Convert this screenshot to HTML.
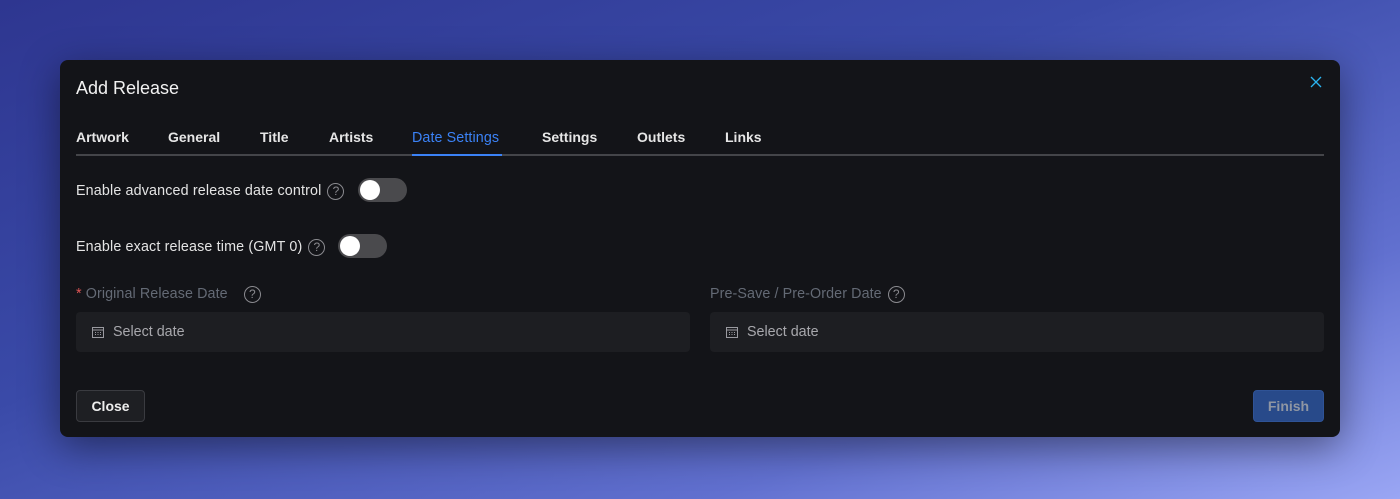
<!DOCTYPE html>
<html><head><style>
*{box-sizing:border-box;margin:0;padding:0}
body{width:1400px;height:499px;overflow:hidden;font-family:"Liberation Sans",sans-serif;background:linear-gradient(160deg,#2e3690 0%,#3a4aa8 40%,#6170cf 75%,#9aa6f4 100%);position:relative}
.m{position:absolute;left:60px;top:60px;width:1280px;height:377px;background:#131418;border-radius:8px;box-shadow:0 10px 40px rgba(0,0,0,.45)}
.t{position:absolute;left:16px;top:18px;font-size:18px;color:#f2f2f2}
.x{position:absolute;left:1249px;top:15px}
.tabs{position:absolute;left:16px;top:69px;width:1248px;height:27px;border-bottom:2px solid #444549}
.tab{position:absolute;top:0;font-size:14px;line-height:16px;font-weight:bold;color:#e6e6e6}
.tab.a{color:#3b82f6;font-weight:normal;font-size:14.3px;letter-spacing:.1px;height:27px;padding-top:1px;border-bottom:2px solid #3b82f6}
.lbl{position:absolute;font-size:14.3px;color:#e4e4e4;display:flex;align-items:center;gap:6px;height:20px;letter-spacing:.15px}
.q{display:inline-block;width:17px;height:17px;border:1.2px solid #8a8a8f;border-radius:50%;font-size:12px;color:#8a8a8f;text-align:center;line-height:15px;letter-spacing:0}
.sw{position:absolute;width:49px;height:24px;border-radius:12px;background:#4a4a4d}
.sw:after{content:"";position:absolute;left:2px;top:2px;width:20px;height:20px;border-radius:50%;background:#fff}
.fl{position:absolute;font-size:14.3px;color:#646a75;display:flex;align-items:center;gap:6px;height:20px;letter-spacing:.1px}
.in{position:absolute;top:252px;width:614px;height:40px;background:#1d1e22;border-radius:4px;font-size:14.3px;color:#a8a8ad}
.in span{position:absolute;left:37px;top:12px}
.in svg{position:absolute;left:16px;top:14px}
.btn{position:absolute;top:330px;height:32px;border-radius:4px;font-size:14px;font-weight:bold;text-align:center;line-height:30px}
</style></head><body>
<div class="m">
<div class="t">Add Release</div>
<svg class="x" width="14" height="14" viewBox="0 0 14 14"><path d="M2 2L12 12M12 2L2 12" stroke="#2ab4f0" stroke-width="1.3"/></svg>
<div class="tabs">
<div class="tab" style="left:0">Artwork</div>
<div class="tab" style="left:92px">General</div>
<div class="tab" style="left:184px">Title</div>
<div class="tab" style="left:253px">Artists</div>
<div class="tab a" style="left:336px;width:90px">Date Settings</div>
<div class="tab" style="left:466px">Settings</div>
<div class="tab" style="left:561px">Outlets</div>
<div class="tab" style="left:649px">Links</div>
</div>
<div class="lbl" style="left:16px;top:121px">Enable advanced release date control <span class="q">?</span></div>
<div class="sw" style="left:298px;top:118px"></div>
<div class="lbl" style="left:16px;top:177px">Enable exact release time (GMT 0) <span class="q">?</span></div>
<div class="sw" style="left:278px;top:174px"></div>
<div class="fl" style="left:16px;top:224px"><span><span style="color:#e05555">*</span> Original Release Date</span>&nbsp;<span class="q">?</span></div>
<div class="fl" style="left:650px;top:224px"><span>Pre-Save / Pre-Order Date</span><span class="q">?</span></div>
<div class="in" style="left:16px"><svg width="12" height="12" viewBox="0 0 12 12"><rect x=".5" y="1.5" width="11" height="10" fill="none" stroke="#9a9aa0"/><path d="M.5 4h11" stroke="#9a9aa0"/><path d="M3 6.5h1M5.5 6.5h1M8 6.5h1M3 8.5h1M5.5 8.5h1M8 8.5h1" stroke="#9a9aa0"/></svg><span>Select date</span></div>
<div class="in" style="left:650px"><svg width="12" height="12" viewBox="0 0 12 12"><rect x=".5" y="1.5" width="11" height="10" fill="none" stroke="#9a9aa0"/><path d="M.5 4h11" stroke="#9a9aa0"/><path d="M3 6.5h1M5.5 6.5h1M8 6.5h1M3 8.5h1M5.5 8.5h1M8 8.5h1" stroke="#9a9aa0"/></svg><span>Select date</span></div>
<div class="btn" style="left:16px;width:69px;background:#1e1f23;border:1px solid #3a3b40;color:#eee">Close</div>
<div class="btn" style="left:1193px;width:71px;background:#284a8a;border:1px solid #2f5396;color:#8f96a3">Finish</div>
</div>
</body></html>
